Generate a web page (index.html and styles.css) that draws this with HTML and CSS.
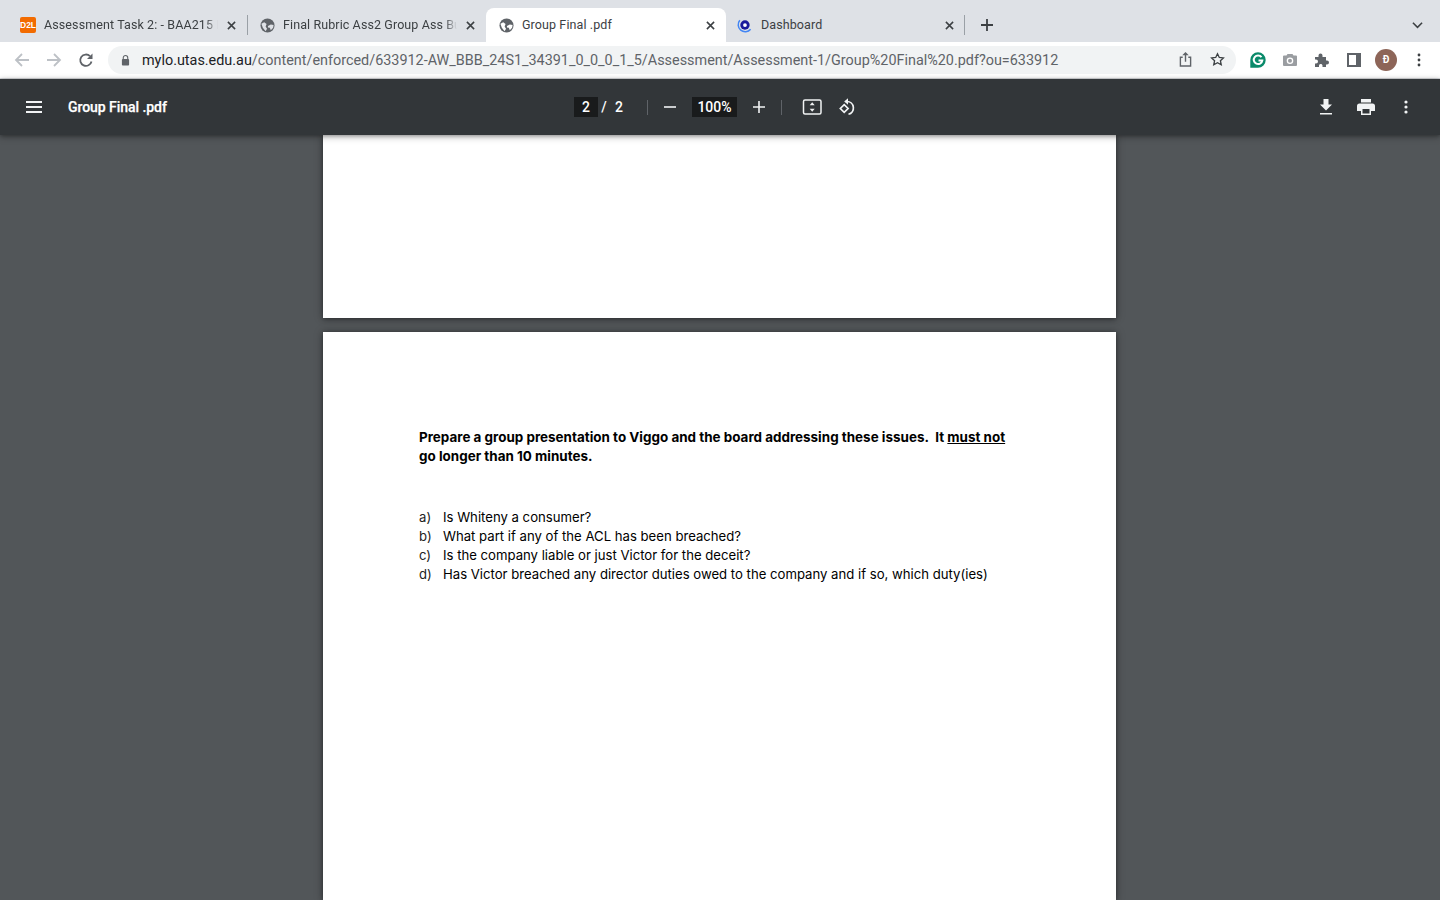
FILE: index.html
```html
<!DOCTYPE html>
<html lang="en">
<head>
<meta charset="utf-8">
<title>Group Final .pdf</title>
<link rel="stylesheet" href="styles.css">
</head>
<body>
<div class="tabstrip">
  <div class="tab">
    <span class="fav-d2l">D2L</span>
    <span class="tab-title">Assessment Task 2: - BAA215 E</span>
    <svg class="tab-x" viewBox="0 0 10 10"><path d="M1 1l8 8M9 1l-8 8"/></svg>
  </div>
  <div class="tab sep">
    <svg class="fav" viewBox="0 0 16 16"><circle cx="8" cy="8" r="7.500" fill="#5f6368"/><path d="M1.500 6l3-1.500 2.500 2L6 9l1.500 2.500L6 14 3 10.500zM8.500 8.500l3-1.500 3 .5-.5 3-2.500 2.500-1-2.500-2-.5z" fill="#dee1e6"/></svg>
    <span class="tab-title">Final Rubric Ass2 Group Ass Bu</span>
    <svg class="tab-x" viewBox="0 0 10 10"><path d="M1 1l8 8M9 1l-8 8"/></svg>
  </div>
  <div class="tab active">
    <svg class="fav" viewBox="0 0 16 16"><circle cx="8" cy="8" r="7.500" fill="#5f6368"/><path d="M1.500 6l3-1.500 2.500 2L6 9l1.500 2.500L6 14 3 10.500zM8.500 8.500l3-1.500 3 .5-.5 3-2.500 2.500-1-2.500-2-.5z" fill="#fff"/></svg>
    <span class="tab-title">Group Final .pdf</span>
    <svg class="tab-x" viewBox="0 0 10 10"><path d="M1 1l8 8M9 1l-8 8"/></svg>
  </div>
  <div class="tab last">
    <svg class="fav" viewBox="0 0 16 16"><path d="M3 2.500A7 7 0 1 0 14.500 12" fill="none" stroke="#4285f4" stroke-width="1.600"/><circle cx="8.500" cy="7.500" r="5" fill="#1a1a9c"/><circle cx="8.500" cy="7.500" r="2" fill="#fff"/></svg>
    <span class="tab-title">Dashboard</span>
    <svg class="tab-x" viewBox="0 0 10 10"><path d="M1 1l8 8M9 1l-8 8"/></svg>
  </div>
  <svg class="newtab" viewBox="0 0 12 12"><path d="M6 0v12M0 6h12"/></svg>
  <svg class="tabmenu" viewBox="0 0 12 8"><path d="M1 1.500l5 5 5-5"/></svg>
</div>

<div class="toolbar">
  <svg class="nav dim" viewBox="0 0 16 16"><path d="M15 8H2M8 2L2 8l6 6"/></svg>
  <svg class="nav dim" viewBox="0 0 16 16"><path d="M1 8h13M8 2l6 6-6 6"/></svg>
  <svg class="nav" viewBox="0 0 16 16"><path d="M13.500 9.500A5.700 5.700 0 1 1 12 4.200"/><path class="solid" d="M14.500 1.500v5.500H9z"/></svg>
  <div class="omnibox">
    <svg class="lock" viewBox="0 0 10 12"><path d="M2.500 5V3.500a2.500 2.500 0 0 1 5 0V5" fill="none" stroke="#5f6368" stroke-width="1.200"/><rect x="1" y="5" width="8" height="7" rx="1" fill="#5f6368"/></svg>
    <span class="url"><span class="host">mylo.utas.edu.au</span>/content/enforced/633912-AW_BBB_24S1_34391_0_0_0_1_5/Assessment/Assessment-1/Group%20Final%20.pdf?ou=633912</span>
    <svg class="omni-share" viewBox="0 0 14 16"><path d="M4 5.500H1.500v9.500h11V5.500H10M7 10.500V1.500"/><path class="solid" d="M7 0l3.500 3.500h-7z"/></svg>
    <svg class="omni-star" viewBox="0 0 16 16"><path d="M8 1.800l1.900 4 4.400.500-3.200 3 .9 4.400L8 11.500l-4 2.200.9-4.400-3.200-3 4.400-.5z"/></svg>
  </div>
  <div class="ext">
    <svg class="ext-icon" viewBox="0 0 16 16"><path d="M8 .3a7.700 7.700 0 1 1 0 15.400H.3V8A7.700 7.700 0 0 1 8 .3z" fill="#0a8a6a"/><path d="M11.500 5.200A4.300 4.300 0 1 0 12.300 8.500H8.500" fill="none" stroke="#fff" stroke-width="2"/></svg>
    <svg class="ext-icon" viewBox="0 0 16 16"><path d="M2 3.500h2.500l1-1.500h5l1 1.500H14a1 1 0 0 1 1 1V13a1 1 0 0 1-1 1H2a1 1 0 0 1-1-1V4.500a1 1 0 0 1 1-1z" fill="#9a9da1"/><circle cx="8" cy="8.800" r="3.300" fill="#fff"/><circle cx="8" cy="8.800" r="2" fill="#9a9da1"/></svg>
    <svg class="ext-icon" viewBox="0 0 16 16"><path d="M1 5h3.500V3.500a2 2 0 0 1 4 0V5H12v3.500h1a2 2 0 0 1 0 4h-1V15H8.500v-1.500a1.800 1.800 0 0 0-3.500 0V15H1v-3.500h1a2 2 0 0 0 0-4H1z" fill="#5f6368"/></svg>
    <svg class="ext-icon panel" viewBox="0 0 14 14"><path fill-rule="evenodd" d="M0 0h14v14H0zM2 2v10h7V2z" fill="#5f6368"/></svg>
    <span class="avatar">Đ</span>
    <svg class="kebab" viewBox="0 0 4 14"><circle cx="2" cy="2" r="1.400"/><circle cx="2" cy="7" r="1.400"/><circle cx="2" cy="12" r="1.400"/></svg>
  </div>
</div>

<div class="pdfbar">
  <div class="pdf-left">
    <svg class="menu" viewBox="0 0 16 12"><path d="M0 1h16M0 6h16M0 11h16"/></svg>
    <span class="pdf-title">Group Final .pdf</span>
  </div>
  <div class="pdf-center">
    <span class="field page-field">2</span>
    <span class="slash">/</span>
    <span class="count">2</span>
    <span class="vsep first"></span>
    <svg class="zoom-btn minus" viewBox="0 0 12 12"><path d="M0 6h12"/></svg>
    <span class="field zoom-field">100%</span>
    <svg class="zoom-btn plus" viewBox="0 0 12 12"><path d="M0 6h12M6 0v12"/></svg>
    <span class="vsep second"></span>
    <svg class="fit" viewBox="0 0 20 16"><rect x="1.500" y="1" width="17.500" height="14" rx="1.500"/><path class="solid" d="M10.200 3.300l2.500 3h-5zM10.200 12.700l-2.500-3h5z"/></svg>
    <svg class="rotate" viewBox="0 0 18 18"><path d="M1.300 10.500l3.900-3.900 3.900 3.900-3.900 3.900z"/><path d="M8 3.500a6.500 6.500 0 0 1 1.500 12.800"/><path class="solid" d="M9 .3v6.400L5.200 3.500z"/></svg>
  </div>
  <div class="pdf-right">
    <svg class="pdf-act" viewBox="0 0 14 16"><path d="M4.500 0h5v5.500H13L7 11.500 1 5.500h3.500zM1 14h12v1.600H1z"/></svg>
    <svg class="pdf-act wide" viewBox="0 0 18 16"><path fill-rule="evenodd" d="M4 0h10v3.500H4zM2.500 4.500h13A2.500 2.500 0 0 1 18 7v5h-4v4H4v-4H0V7a2.500 2.500 0 0 1 2.500-2.500zM5.500 10v4.500h7V10z"/></svg>
    <svg class="pdf-kebab" viewBox="0 0 4 14"><circle cx="2" cy="2" r="1.600"/><circle cx="2" cy="7" r="1.600"/><circle cx="2" cy="12" r="1.600"/></svg>
  </div>
</div>

<main class="viewer">
  <div class="page page-one"></div>
  <div class="page page-two">
    <p class="lead">Prepare a group presentation to Viggo and the board addressing these issues.&nbsp; It <u>must not</u><br>go longer than 10 minutes.</p>
    <ol class="questions">
      <li><span class="mark">a)</span><span>Is Whiteny a consumer?</span></li>
      <li><span class="mark">b)</span><span>What part if any of the ACL has been breached?</span></li>
      <li><span class="mark">c)</span><span>Is the company liable or just Victor for the deceit?</span></li>
      <li><span class="mark">d)</span><span>Has Victor breached any director duties owed to the company and if so, which duty(ies)</span></li>
    </ol>
  </div>
</main>
</body>
</html>
```

FILE: styles.css
```css
* { box-sizing: border-box; }
html, body { margin: 0; height: 100%; overflow: hidden; }
body { width: 1440px; height: 900px; display: flex; flex-direction: column; font-family: Roboto, "Liberation Sans", sans-serif; background: #525659; }

.tabstrip { height: 42px; flex: none; background: #dee1e6; display: flex; align-items: flex-end; padding-left: 8px; position: relative; }
.tab { width: 239px; height: 34px; flex: none; display: flex; align-items: center; padding: 0 11px 0 12px; position: relative; color: #3c4043; font-size: 12.500px; }
.tab.sep { padding-left: 13px; }
.tab.sep::before, .tab.last::after { content: ""; position: absolute; top: 7px; width: 1px; height: 20px; background: #9aa0a6; }
.tab.sep::before { left: 0; }
.tab.last::after { right: 0; }
.tab.active { background: #fff; border-radius: 8px 8px 0 0; width: 240px; padding-left: 13px; }
.tab.last { padding-left: 11px; }
.tab.last .tab-title { margin-left: 9px; }
.tab-title { flex: 1; min-width: 0; margin: -2px 9px 0 8px; white-space: nowrap; overflow: hidden; letter-spacing: .1px; -webkit-mask-image: linear-gradient(to right, #000 calc(100% - 12px), transparent); mask-image: linear-gradient(to right, #000 calc(100% - 12px), transparent); }
.tab.active .tab-title, .tab.last .tab-title { -webkit-mask-image: none; mask-image: none; }
.tab-x { width: 9px; height: 9px; flex: none; fill: none; stroke: #3c4043; stroke-width: 1.700; }
.fav-d2l { width: 16px; height: 16px; flex: none; border-radius: 2px; background: #f26b00; color: #fff; font: 700 8.500px/16px "Liberation Sans", sans-serif; text-align: center; }
.fav { width: 15px; height: 15px; flex: none; }
.newtab { width: 12px; height: 12px; flex: none; margin: 0 0 11px 16px; fill: none; stroke: #3c4043; stroke-width: 1.800; }
.tabmenu { width: 11px; height: 8px; position: absolute; right: 17px; top: 21px; fill: none; stroke: #3c4043; stroke-width: 1.700; }

.toolbar { height: 37px; flex: none; background: #fff; border-bottom: 1px solid #dadce0; display: flex; align-items: center; padding: 0 0 0 14px; }
.toolbar > .nav { width: 16px; height: 16px; margin-right: 16px; flex: none; fill: none; stroke: #5f6368; stroke-width: 1.800; }
.toolbar > .nav.dim { stroke: #bdc1c6; }
.toolbar .nav .solid { fill: #5f6368; stroke: none; }
.omnibox { width: 1128px; height: 28px; margin: 0 0 1px -2px; background: #f1f3f4; border-radius: 14px; display: flex; align-items: center; padding: 0 10px 0 13px; }
.lock { width: 9px; height: 12px; flex: none; }
.url { flex: 1; margin: 2px 0 0 12px; font-size: 14.400px; color: #5f6368; white-space: nowrap; overflow: hidden; }
.host { color: #202124; }
.omni-share { width: 13px; height: 15px; flex: none; fill: none; stroke: #5f6368; stroke-width: 1.500; margin-right: 18px; }
.omni-share .solid { fill: #5f6368; stroke: none; }
.omni-star { width: 15px; height: 15px; flex: none; fill: none; stroke: #3c4043; stroke-width: 1.400; margin-right: 1px; }
.ext { display: flex; align-items: center; margin-left: 14px; }
.ext-icon { width: 16px; height: 16px; flex: none; margin-right: 16px; }
.ext-icon.panel { width: 14px; height: 14px; margin: 0 14px 0 1px; }
.avatar { width: 22px; height: 22px; flex: none; border-radius: 50%; background: #8d6558; color: #fff; font-size: 10px; font-weight: 700; line-height: 22px; text-align: center; }
.kebab { width: 4px; height: 14px; flex: none; margin-left: 19.500px; fill: #3c4043; }

.pdfbar { height: 56px; flex: none; background: #323639; display: flex; align-items: center; position: relative; z-index: 2; box-shadow: 0 1px 4px rgba(0,0,0,.35), 0 2px 8px rgba(0,0,0,.2); color: #fff; }
.pdf-left { display: flex; align-items: center; padding-left: 26px; width: 574px; flex: none; }
.menu { width: 16px; height: 12px; flex: none; fill: none; stroke: #f1f3f4; stroke-width: 2; }
.pdf-title { margin-left: 26px; font-size: 14px; font-weight: 500; letter-spacing: -.05px; -webkit-text-stroke: .25px #fff; }
.pdf-center { display: flex; align-items: center; font-size: 14px; font-weight: 500; flex: none; }
.field { height: 20px; background: #191b1c; line-height: 20px; text-align: center; display: block; }
.page-field { width: 24px; }
.zoom-field { width: 45px; }
.slash { width: 12px; text-align: center; }
.count { margin-left: 4px; width: 10px; text-align: center; }
.vsep { width: 1px; height: 15px; background: #5f6368; flex: none; }
.vsep.first { margin: 0 16px 0 23px; }
.vsep.second { margin: 0 20px 0 16px; }
.zoom-btn { width: 12px; height: 12px; flex: none; fill: none; stroke: #f1f3f4; stroke-width: 1.600; }
.zoom-btn.minus { margin-right: 16px; }
.zoom-btn.plus { margin-left: 16px; }
.fit { width: 20px; height: 16px; flex: none; fill: none; stroke: #f1f3f4; stroke-width: 1.500; }
.fit .solid, .rotate .solid { fill: #f1f3f4; stroke: none; }
.rotate { width: 18px; height: 18px; flex: none; margin-left: 17px; fill: none; stroke: #f1f3f4; stroke-width: 1.700; }
.pdf-right { margin-left: auto; display: flex; align-items: center; padding-right: 32px; }
.pdf-act { width: 14px; height: 16px; flex: none; fill: #f1f3f4; }
.pdf-act.wide { width: 18px; height: 16px; margin-left: 24px; }
.pdf-kebab { width: 4px; height: 14px; flex: none; margin-left: 29px; fill: #f1f3f4; }

.viewer { flex: 1; min-height: 0; overflow: hidden; display: flex; flex-direction: column; align-items: center; padding-right: 1px; background: #525659; }
.page { width: 793px; background: #fff; flex: none; box-shadow: 0 1px 5px rgba(0,0,0,.45), 0 0 10px rgba(0,0,0,.18); }
.page-one { height: 183px; margin-bottom: 14px; }
.page-two { flex: 1; padding: 96px 96px 0; font-family: Inter, Lato, sans-serif; color: #000; font-size: 13.150px; line-height: 19px; }
.lead { margin: 0; font-weight: 700; white-space: nowrap; font-size: 13.450px; }
.questions { list-style: none; margin: 42px 0 0; padding: 0; }
.questions li { display: flex; height: 19px; white-space: nowrap; }
.mark { width: 24px; flex: none; color: #222; }
```
